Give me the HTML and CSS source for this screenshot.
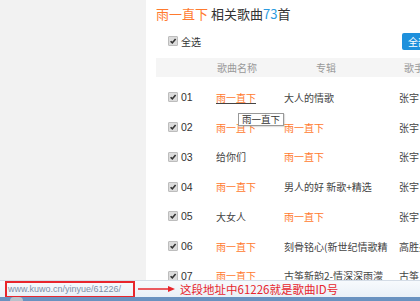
FILE: index.html
```html
<!DOCTYPE html>
<html lang="zh">
<head>
<meta charset="utf-8">
<title>雨一直下 相关歌曲</title>
<link rel="stylesheet" href="styles.css">
</head>
<body>
<div class="page">
  <aside class="side"></aside>
  <main class="main">
    <h1 class="title"><span class="kw">雨一直下</span> 相关歌曲<span class="num">73</span>首</h1>
    <div class="toolbar">
      <label class="selall"><span class="cb"><svg viewBox="0 0 8 8"><path d="M1.6 4.2 L3.3 5.9 L6.6 1.9" /></svg></span>全选</label>
      <button class="btn">全部播放</button>
    </div>
    <div class="thead">
      <span></span><span>歌曲名称</span><span>专辑</span><span>歌手</span>
    </div>
    <ul class="rows">
      <li class="row"><span class="idx"><span class="cb"><svg viewBox="0 0 8 8"><path d="M1.6 4.2 L3.3 5.9 L6.6 1.9" /></svg></span>01</span><span class="song hot hover">雨一直下<span class="tip">雨一直下</span></span><span class="album">大人的情歌</span><span class="singer">张宇</span></li>
      <li class="row"><span class="idx"><span class="cb"><svg viewBox="0 0 8 8"><path d="M1.6 4.2 L3.3 5.9 L6.6 1.9" /></svg></span>02</span><span class="song hot">雨一直下</span><span class="album hot">雨一直下</span><span class="singer">张宇</span></li>
      <li class="row"><span class="idx"><span class="cb"><svg viewBox="0 0 8 8"><path d="M1.6 4.2 L3.3 5.9 L6.6 1.9" /></svg></span>03</span><span class="song">给你们</span><span class="album hot">雨一直下</span><span class="singer">张宇</span></li>
      <li class="row"><span class="idx"><span class="cb"><svg viewBox="0 0 8 8"><path d="M1.6 4.2 L3.3 5.9 L6.6 1.9" /></svg></span>04</span><span class="song hot">雨一直下</span><span class="album">男人的好 新歌+精选</span><span class="singer">张宇</span></li>
      <li class="row"><span class="idx"><span class="cb"><svg viewBox="0 0 8 8"><path d="M1.6 4.2 L3.3 5.9 L6.6 1.9" /></svg></span>05</span><span class="song">大女人</span><span class="album hot">雨一直下</span><span class="singer">张宇</span></li>
      <li class="row"><span class="idx"><span class="cb"><svg viewBox="0 0 8 8"><path d="M1.6 4.2 L3.3 5.9 L6.6 1.9" /></svg></span>06</span><span class="song hot">雨一直下</span><span class="album">刻骨铭心(新世纪情歌精</span><span class="singer">高胜美</span></li>
      <li class="row"><span class="idx"><span class="cb"><svg viewBox="0 0 8 8"><path d="M1.6 4.2 L3.3 5.9 L6.6 1.9" /></svg></span>07</span><span class="song hot">雨一直下</span><span class="album">古筝新韵2-情深深雨濛</span><span class="singer">古筝</span></li>
    </ul>
  </main>
</div>
<div class="status">
  <div class="statusbar">
    <span class="url">www.kuwo.cn/yinyue/61226/</span>
    <svg class="arrow" viewBox="0 0 37 8"><path d="M0 4 H31" /><path class="head" d="M30 1 L37 4 L30 7 Z" /></svg>
    <span class="note">这段地址中61226就是歌曲ID号</span>
  </div>
  <div class="taskbar"><span class="orb"></span></div>
</div>
</body>
</html>
```

FILE: styles.css
```css
html, body {
  margin: 0;
  padding: 0;
}
body {
  width: 420px;
  height: 301px;
  overflow: hidden;
  position: relative;
  font-family: "Noto Sans CJK SC", "Liberation Sans", sans-serif;
  color: #333;
  background: #f2f2f2;
}
.page {
  display: flex;
  height: 301px;
}
.side {
  flex: 0 0 146px;
  background: #f2f2f2;
}
.main {
  flex: 0 0 330px;
  background: #fff;
  padding: 5px 0 0 10px;
  box-sizing: border-box;
}
.title {
  margin: 0;
  font-size: 13px;
  line-height: 18px;
  font-weight: normal;
  color: #333;
  white-space: nowrap;
}
.title .kw { color: #ff7a2e; }
.title .num { color: #2b9be0; }
.toolbar {
  margin-top: 9px;
  height: 18px;
  display: flex;
  align-items: center;
  justify-content: space-between;
  padding-left: 12px;
}
.selall {
  display: flex;
  align-items: center;
  font-size: 10px;
  color: #333;
}
.cb {
  width: 8px;
  height: 8px;
  background: #dcdcdc;
  border: 1px solid #bdbdbd;
  border-radius: 1px;
  margin-right: 3px;
  display: inline-flex;
}
.cb svg {
  width: 8px;
  height: 8px;
}
.cb path {
  fill: none;
  stroke: #333;
  stroke-width: 1.6;
}
.btn {
  width: 80px;
  height: 17px;
  border: 0;
  border-radius: 2px;
  background: #1e90dc;
  color: #fff;
  font-family: inherit;
  font-size: 10px;
  text-align: left;
  padding: 0 0 0 6px;
  transform: translateX(6px);
}
.thead {
  margin-top: 8px;
  height: 19px;
  background: #f5f5f5;
  display: grid;
  grid-template-columns: 61px 99px 88px 1fr;
  align-items: center;
  font-size: 10px;
  color: #999;
  white-space: nowrap;
}
.rows {
  list-style: none;
  margin: 5.6px 0 0;
  padding: 0;
}
.row {
  height: 29.75px;
  display: grid;
  grid-template-columns: 48px 68px 115px 1fr;
  align-items: center;
  padding-left: 12px;
  font-size: 10px;
  color: #444;
  white-space: nowrap;
}
.idx {
  display: flex;
  align-items: center;
  color: #333;
  font-family: "Liberation Sans", sans-serif;
  font-size: 10.5px;
}
.song, .album, .singer {
  overflow: hidden;
}
.album { width: 110px; }
.hot { color: #ff7a2e; }
.song.hover {
  position: relative;
  overflow: visible;
  text-decoration: underline;
  text-decoration-color: #444;
}
.tip {
  position: absolute;
  left: 22px;
  top: 23px;
  padding: 0 3px;
  line-height: 11px;
  font-size: 9.5px;
  color: #333;
  background: #fff;
  border: 1px solid #999;
  box-shadow: 1px 1px 1px rgba(0,0,0,0.12);
  display: inline-block;
}
.status {
  position: absolute;
  left: 0;
  right: 0;
  bottom: 0;
}
.statusbar {
  height: 16px;
  background: linear-gradient(#f7fafd, #eaf0f7);
  border-top: 1px solid #d4dce6;
  display: flex;
  align-items: center;
  padding-left: 5px;
}
.url {
  box-sizing: border-box;
  width: 130px;
  height: 17px;
  border: 2px solid #e8262d;
  font-family: "Liberation Sans", sans-serif;
  font-size: 9px;
  line-height: 13px;
  color: #8090a8;
  padding-left: 1px;
  white-space: nowrap;
}
.arrow {
  width: 37px;
  height: 8px;
  margin-left: 3px;
}
.arrow path {
  stroke: #e8262d;
  stroke-width: 1.5;
  fill: none;
}
.arrow path.head {
  fill: #e8262d;
  stroke: none;
}
.note {
  margin-left: 5px;
  font-size: 11.5px;
  color: #e8262d;
  white-space: nowrap;
}
.taskbar {
  height: 4px;
  background: #6a92c0;
  position: relative;
}
.orb {
  position: absolute;
  left: 10px;
  top: 0;
  width: 13px;
  height: 4px;
  border-radius: 6px 6px 0 0;
  background: #b9c2cc;
}
```
